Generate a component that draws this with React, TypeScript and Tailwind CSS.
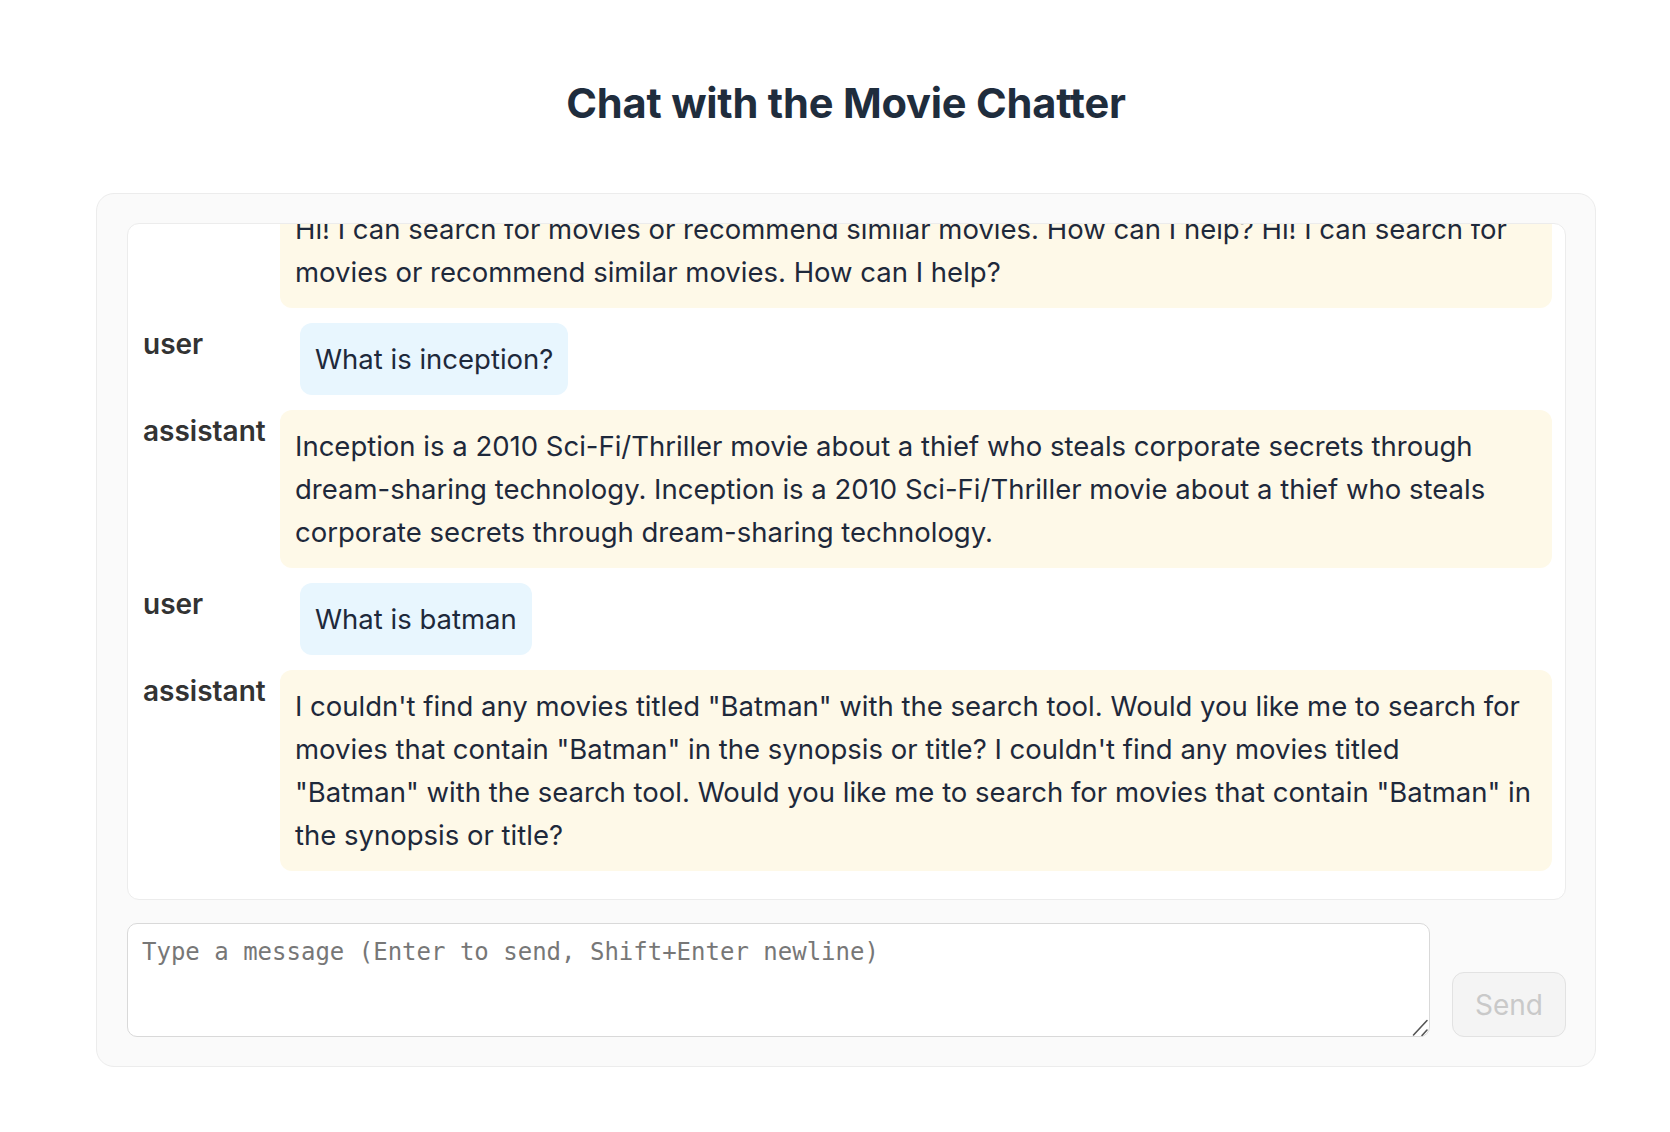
import React from 'react';

type Msg = { role: 'user' | 'assistant'; text: string };

const messages: Msg[] = [
  {
    role: 'assistant',
    text: 'Hi! I can search for movies or recommend similar movies. How can I help? Hi! I can search for movies or recommend similar movies. How can I help?',
  },
  { role: 'user', text: 'What is inception?' },
  {
    role: 'assistant',
    text: 'Inception is a 2010 Sci-Fi/Thriller movie about a thief who steals corporate secrets through dream-sharing technology. Inception is a 2010 Sci-Fi/Thriller movie about a thief who steals corporate secrets through dream-sharing technology.',
  },
  { role: 'user', text: 'What is batman' },
  {
    role: 'assistant',
    text: 'I couldn\'t find any movies titled "Batman" with the search tool. Would you like me to search for movies that contain "Batman" in the synopsis or title? I couldn\'t find any movies titled\n"Batman" with the search tool. Would you like me to search for movies that contain "Batman" in the synopsis or title?',
  },
];

const MessageRow: React.FC<{ msg: Msg }> = ({ msg }) => {
  const isUser = msg.role === 'user';
  return (
    <div className="flex items-start shrink-0">
      <div className="w-[137px] shrink-0 font-semibold text-[28px] text-[#333333] leading-[43px]">{msg.role}</div>
      <div
        className={
          isUser
            ? 'ml-[20px] rounded-[12px] bg-[#e8f6fe] px-[15px] py-[14.5px] text-[#1e293b] leading-[43px]'
            : 'flex-1 whitespace-pre-line rounded-[12px] bg-[#fef9e8] pl-[15px] pr-[15px] py-[14.5px] text-[#1e293b] leading-[43px]'
        }
      >
        {msg.text}
      </div>
    </div>
  );
};

export default function App() {
  return (
    <div className="min-h-screen bg-white font-['Inter',sans-serif] text-[27.5px]">
      <div className="ml-[96px] w-[1500px] pt-[78px]">
        <h1 className="text-center text-[41.6px] leading-[50px] font-bold text-[#1f2d3d] tracking-[-0.2px]">
          Chat with the Movie Chatter
        </h1>

        <div className="mt-[65px] flex flex-col gap-[23px] rounded-[18px] border border-[#ececec] bg-[#fafafa] pl-[30px] pr-[29px] pt-[29px] pb-[29px]">
          <div className="flex h-[677px] flex-col justify-end gap-[15px] overflow-hidden rounded-[12px] border border-[#ececec] bg-white pl-[15px] pr-[13px] pb-[28px]">
            {messages.map((m, i) => (
              <MessageRow key={i} msg={m} />
            ))}
          </div>

          <div className="flex items-end gap-[22px]">
            <div className="relative flex-1">
              <textarea
                placeholder="Type a message (Enter to send, Shift+Enter newline)"
                className="block h-[114px] w-full resize-none rounded-[10px] border border-[#d9d9d9] bg-white px-[14px] py-[13px] font-['DejaVu_Sans_Mono',monospace] text-[24px] leading-[30px] text-[#333] placeholder:text-[#777777] outline-none"
              />
              <svg
                className="pointer-events-none absolute right-0 bottom-0"
                width="20"
                height="20"
                viewBox="0 0 20 20"
                fill="none"
                stroke="#555555"
                strokeWidth="1.6"
                strokeLinecap="round"
              >
                <path d="M3.5 18 L17 3.5" />
                <path d="M12 18.5 L17 13" />
              </svg>
            </div>
            <button
              disabled
              className="h-[65px] w-[114px] shrink-0 rounded-[12px] border border-[#e2e2e2] bg-[#f4f4f4] text-[28px] text-[#c9c9c9]"
            >
              Send
            </button>
          </div>
        </div>
      </div>
    </div>
  );
}
